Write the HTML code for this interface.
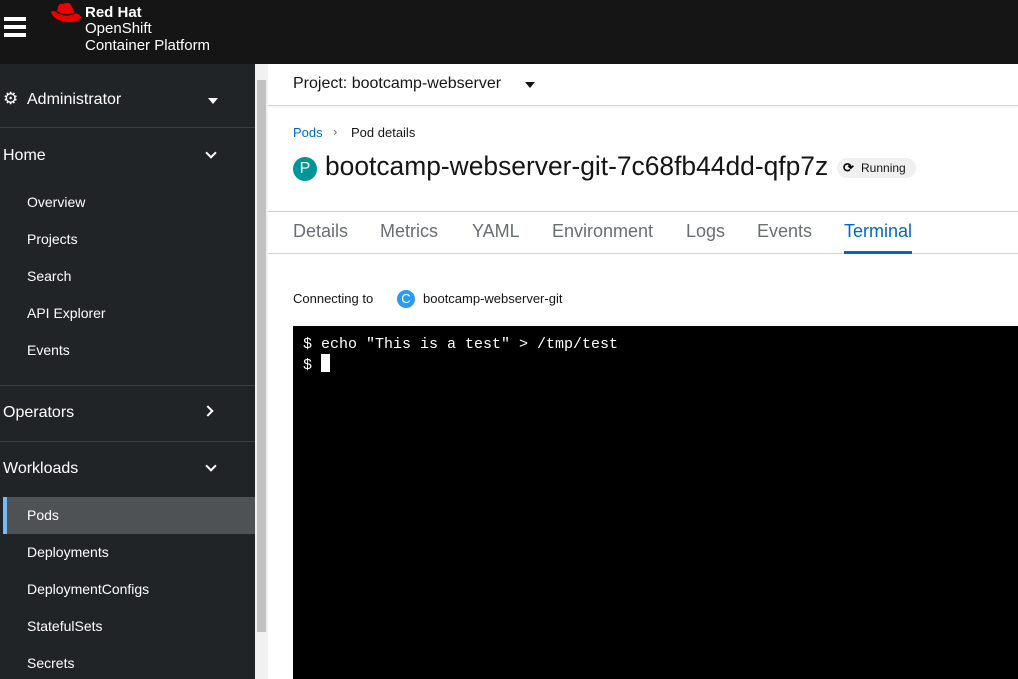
<!DOCTYPE html><html><head><style>
*{margin:0;padding:0;box-sizing:border-box}
body{width:1018px;height:679px;overflow:hidden;font-family:"Liberation Sans",sans-serif;background:#fff;position:relative}
.a{position:absolute}
.hdr{left:0;top:0;width:1018px;height:64px;background:#151515}
.side{left:0;top:64px;width:255px;height:615px;background:#212427;color:#fff}
.sb{left:255px;top:64px;width:13px;height:615px;background:#f1f1f1}
.th{left:257px;top:80px;width:9px;height:552px;background:#c1c1c1}
.it{position:absolute;left:27px;font-size:14px;color:#fff}
.sec{position:absolute;left:3px;font-size:16px;color:#fff}
.sep{position:absolute;left:0;width:255px;height:1px;background:#3c3f42}
.chev{position:absolute;left:207px;width:8px;height:8px;border-right:2px solid #fff;border-bottom:2px solid #fff}
.tab{position:absolute;top:221px;font-size:18px;color:#6a6e73}
</style></head><body>
<div class="a hdr">
 <div class="a" style="left:4px;top:17px;width:22px;height:4px;background:#fff;box-shadow:0 8px 0 #fff,0 16px 0 #fff"></div>
 <svg class="a" style="left:50px;top:1px" width="32" height="24" viewBox="0 0 32 24"><path d="M1 11 Q4 20 18 21 Q31 21 31 16 Q30 13 25 12 L22 6 Q20 1 16 2 L12 3 Q9 2 8 6 L7 11 Q2 9 1 11 Z" fill="#e00"/><path d="M7 11 Q15 16 25 12" stroke="#151515" stroke-width="1.6" fill="none"/></svg>
 <div class="a" style="left:85px;top:4px;color:#fff;font-weight:bold;font-size:15px">Red Hat</div>
 <div class="a" style="left:85px;top:20px;color:#fff;font-size:15px">OpenShift</div>
 <div class="a" style="left:85px;top:37px;color:#fff;font-size:15px">Container Platform</div>
</div>
<div class="a side">
 <div class="a" style="left:3px;top:25px;color:#fff;font-size:17px">⚙</div>
 <div class="sec" style="left:27px;top:27px">Administrator</div>
 <div class="a" style="left:208px;top:34px;border-left:5px solid transparent;border-right:5px solid transparent;border-top:6px solid #fff"></div>
 <div class="sep" style="top:63px"></div>
 <div class="sec" style="top:83px">Home</div><div class="chev" style="top:85px;transform:rotate(45deg)"></div>
 <div class="it" style="top:130px">Overview</div>
 <div class="it" style="top:167px">Projects</div>
 <div class="it" style="top:204px">Search</div>
 <div class="it" style="top:241px">API Explorer</div>
 <div class="it" style="top:278px">Events</div>
 <div class="sep" style="top:321px"></div>
 <div class="sec" style="top:340px">Operators</div><div class="chev" style="top:343px;left:204px;transform:rotate(-45deg)"></div>
 <div class="sep" style="top:377px"></div>
 <div class="sec" style="top:396px">Workloads</div><div class="chev" style="top:398px;transform:rotate(45deg)"></div>
 <div class="a" style="left:0;top:433px;width:255px;height:37px;background:#4f5255;border-left:3px solid #212427"></div>
 <div class="a" style="left:3px;top:433px;width:4px;height:37px;background:#73bcf7"></div>
 <div class="it" style="top:443px">Pods</div>
 <div class="it" style="top:480px">Deployments</div>
 <div class="it" style="top:517px">DeploymentConfigs</div>
 <div class="it" style="top:554px">StatefulSets</div>
 <div class="it" style="top:591px">Secrets</div>
</div>
<div class="a sb"></div><div class="a th"></div>
<div class="a" style="left:268px;top:105px;width:750px;height:1px;background:#d2d2d2;box-shadow:0 1px 2px rgba(0,0,0,.1)"></div>
<div class="a" style="left:293px;top:75px;font-size:16px;color:#151515">Project: bootcamp-webserver</div>
<div class="a" style="left:525px;top:82px;border-left:5px solid transparent;border-right:5px solid transparent;border-top:6px solid #151515"></div>
<div class="a" style="left:293px;top:125px;font-size:13px;color:#06c">Pods</div>
<div class="a" style="left:333px;top:124px;font-size:13px;color:#6a6e73">›</div>
<div class="a" style="left:351px;top:125px;font-size:13px;color:#151515">Pod details</div>
<div class="a" style="left:293px;top:157px;width:24px;height:24px;border-radius:50%;background:#009596;color:#fff;font-size:16px;text-align:center;line-height:24px">P</div>
<div class="a" style="left:325px;top:151px;font-size:26.4px;color:#151515">bootcamp-webserver-git-7c68fb44dd-qfp7z</div>
<div class="a" style="left:837px;top:158px;width:79px;height:20px;border-radius:10px;background:#f0f0f0;font-size:12px;color:#151515;line-height:20px;padding-left:24px">Running</div>
<div class="a" style="left:843px;top:158px;font-size:13px;line-height:20px;font-weight:bold">⟳</div>
<div class="a" style="left:268px;top:211px;width:750px;height:1px;background:#d2d2d2"></div>
<div class="a" style="left:268px;top:253px;width:750px;height:1px;background:#d2d2d2"></div>
<div class="tab" style="left:293px">Details</div>
<div class="tab" style="left:380px">Metrics</div>
<div class="tab" style="left:472px">YAML</div>
<div class="tab" style="left:552px">Environment</div>
<div class="tab" style="left:686px">Logs</div>
<div class="tab" style="left:757px">Events</div>
<div class="tab" style="left:844px;color:#06c">Terminal</div>
<div class="a" style="left:844px;top:251px;width:68px;height:3px;background:#06c"></div>
<div class="a" style="left:293px;top:291px;font-size:13px;color:#151515">Connecting to</div>
<div class="a" style="left:397px;top:290px;width:18px;height:18px;border-radius:50%;background:#2b9af3;color:#fff;font-size:13px;text-align:center;line-height:18px">C</div>
<div class="a" style="left:423px;top:291px;font-size:13px;color:#151515">bootcamp-webserver-git</div>
<div class="a" style="left:293px;top:326px;width:725px;height:353px;background:#000;color:#fff;font-family:'Liberation Mono',monospace;font-size:15px;padding:9px 0 0 10px;line-height:19px">$ echo "This is a test" &gt; /tmp/test<br>$ <span style="display:inline-block;width:9px;height:18px;background:#fff;vertical-align:-3px"></span></div>
</body></html>
